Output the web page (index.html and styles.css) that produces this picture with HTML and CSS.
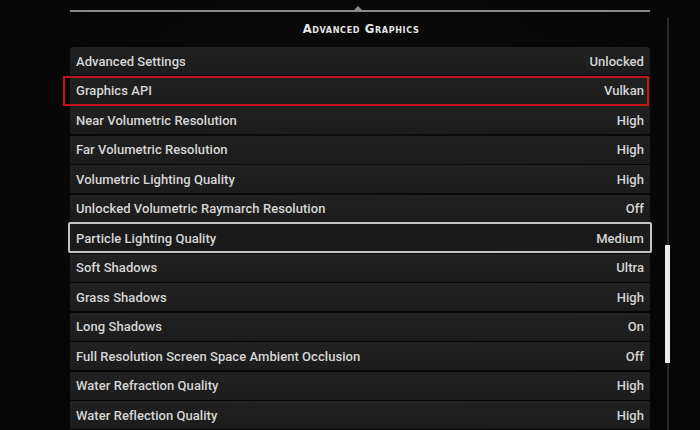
FILE: index.html
```html
<!DOCTYPE html>
<html>
<head>
<meta charset="utf-8">
<link rel="stylesheet" href="styles.css">
</head>
<body>
<div class="screen">
  <div class="panel">
    <div class="header">
      <div class="rule"><span class="notch"></span></div>
      <div class="title">Advanced Graphics</div>
    </div>
    <div class="list">
      <div class="row"><span class="label">Advanced Settings</span><span class="value">Unlocked</span></div>
      <div class="row row-red"><span class="label">Graphics API</span><span class="value">Vulkan</span></div>
      <div class="row"><span class="label">Near Volumetric Resolution</span><span class="value">High</span></div>
      <div class="row"><span class="label">Far Volumetric Resolution</span><span class="value">High</span></div>
      <div class="row"><span class="label">Volumetric Lighting Quality</span><span class="value">High</span></div>
      <div class="row"><span class="label">Unlocked Volumetric Raymarch Resolution</span><span class="value">Off</span></div>
      <div class="row row-sel"><span class="label">Particle Lighting Quality</span><span class="value">Medium</span></div>
      <div class="row"><span class="label">Soft Shadows</span><span class="value">Ultra</span></div>
      <div class="row"><span class="label">Grass Shadows</span><span class="value">High</span></div>
      <div class="row"><span class="label">Long Shadows</span><span class="value">On</span></div>
      <div class="row"><span class="label">Full Resolution Screen Space Ambient Occlusion</span><span class="value">Off</span></div>
      <div class="row"><span class="label">Water Refraction Quality</span><span class="value">High</span></div>
      <div class="row"><span class="label">Water Reflection Quality</span><span class="value">High</span></div>
    </div>
  </div>
  <div class="scroll">
    <div class="track"><div class="thumb"></div></div>
  </div>
</div>
</body>
</html>
```
FILE: styles.css
```css
html, body {
  margin: 0;
  padding: 0;
  background: #070707;
  width: 700px;
  height: 430px;
  overflow: hidden;
}
.screen {
  display: flex;
  height: 430px;
  background: radial-gradient(ellipse at 50% 40%, #0d0d0d 0%, #060606 80%);
  font-family: Roboto, "Liberation Sans", sans-serif;
}
.panel {
  margin-left: 70px;
  width: 580px;
  display: flex;
  flex-direction: column;
}
.header {
  height: 47px;
  display: flex;
  flex-direction: column;
  align-items: center;
}
.rule {
  margin-top: 10px;
  width: 100%;
  height: 2px;
  background: #8a8a8a;
  position: relative;
}
.notch {
  position: absolute;
  left: 284px;
  top: -4px;
  width: 0;
  height: 0;
  border-left: 4px solid transparent;
  border-right: 4px solid transparent;
  border-bottom: 4px solid #8a8a8a;
}
.title {
  margin-top: 10px;
  margin-left: 2px;
  font-family: "DejaVu Sans Condensed", "DejaVu Sans", sans-serif;
  font-weight: bold;
  font-variant: small-caps;
  font-size: 13px;
  letter-spacing: 0.6px;
  color: #e4e4e4;
  line-height: 14px;
}
.list {
  display: flex;
  flex-direction: column;
  gap: 1.5px;
}
.row {
  height: 28px;
  background: linear-gradient(180deg, #212121 0%, #1c1c1c 100%);
  display: flex;
  align-items: center;
  justify-content: space-between;
  padding: 0 6px 0 6px;
  font-size: 13px;
  font-weight: 500;
  letter-spacing: 0.05px;
  color: #d6d6d6;
  position: relative;
  box-sizing: border-box;
}
.row:first-child {
  border-radius: 4px 4px 0 0;
}
.value {
  color: #d4d4d4;
}
.row-red::before {
  content: "";
  position: absolute;
  top: -1px;
  bottom: -1px;
  left: -7px;
  right: 1px;
  border: 2px solid #c3161c;
}
.row-sel {
  background: #1a1a1a;
}
.row-sel::before {
  content: "";
  position: absolute;
  top: -2px;
  bottom: -1px;
  left: -2px;
  right: -2px;
  border: 2px solid #c4c4c4;
  border-radius: 2px;
}
.scroll {
  margin-left: 16px;
  width: 5px;
  padding-top: 18px;
}
.track {
  margin-left: 1px;
  width: 2px;
  height: 412px;
  background: #2a2a2a;
  position: relative;
}
.thumb {
  position: absolute;
  left: -2px;
  top: 227px;
  width: 5px;
  height: 118px;
  background: #ececec;
}
```
